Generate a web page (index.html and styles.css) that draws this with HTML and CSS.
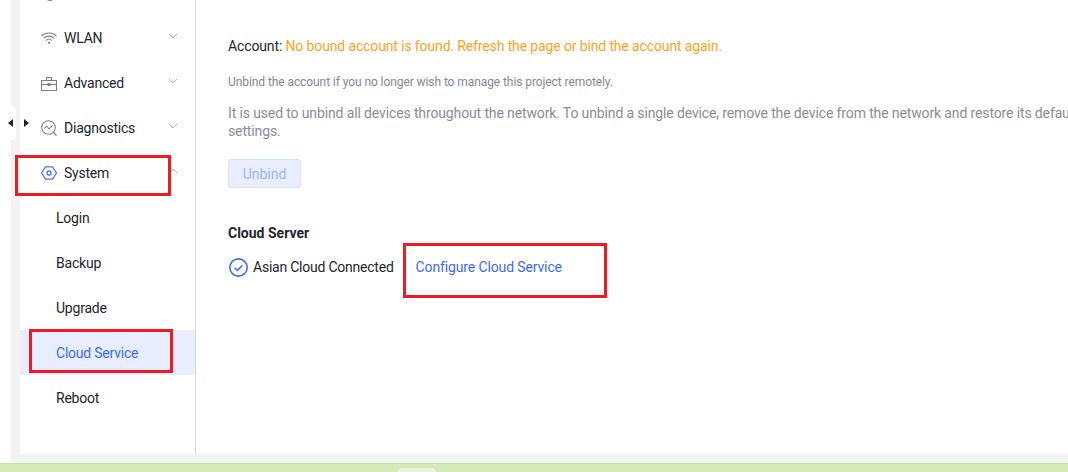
FILE: index.html
```html
<!DOCTYPE html>
<html lang="en">
<head>
  <meta charset="UTF-8">
  <title>Cloud Service</title>
  <link rel="stylesheet" href="styles.css">
</head>
<body>
<div class="page">
  <div class="shell">
    <div class="pager">
      <span class="pager-btn"><i class="arrow-left"></i></span>
      <span class="pager-btn"><i class="arrow-right"></i></span>
    </div>
    <aside class="sidebar">
      <div class="menu">
        <div class="menu-item">
          <svg class="icon icon-top" viewBox="0 0 16 16"><circle class="dot" cx="8" cy="8" r="5"/></svg>
        </div>
        <div class="menu-item">
          <svg class="icon" viewBox="0 0 16 16"><path d="M.5 6.2C4.6 2 11.400 2 15.500 6.200M2.700 8.400C5.600 5.400 10.400 5.400 13.300 8.400M4.900 10.500C6.700 8.800 9.300 8.800 11.100 10.500"/><circle class="dot" cx="8" cy="12.900" r="1.100"/></svg>
          <span>WLAN</span>
          <svg class="chevron" viewBox="0 0 10 6"><path d="M1 1l4 4 4-4"/></svg>
        </div>
        <div class="menu-item">
          <svg class="icon" viewBox="0 0 16 16"><path d="M.5 5.500h15v10h-15zM.5 9.500h15M5.500 5.500v-3h5v3"/><path d="M7 8.500h2v2H7z"/></svg>
          <span>Advanced</span>
          <svg class="chevron" viewBox="0 0 10 6"><path d="M1 1l4 4 4-4"/></svg>
        </div>
        <div class="menu-item">
          <svg class="icon" viewBox="0 0 16 16"><circle cx="7.500" cy="7.500" r="6.800"/><path d="M12.500 12.500l3 3M3.500 8.500l2-2.500 2.500 3 3.500-3.500"/></svg>
          <span>Diagnostics</span>
          <svg class="chevron" viewBox="0 0 10 6"><path d="M1 1l4 4 4-4"/></svg>
        </div>
        <div class="menu-item">
          <svg class="icon icon-blue" viewBox="0 0 16 16"><path d="M4.500 1.800h7L15.400 8l-3.900 6.200h-7L.6 8z"/><circle cx="8" cy="8" r="2"/></svg>
          <span>System</span>
          <svg class="chevron" viewBox="0 0 10 6"><path d="M1 5l4-4 4 4"/></svg>
        </div>
        <div class="menu-item sub">Login</div>
        <div class="menu-item sub">Backup</div>
        <div class="menu-item sub">Upgrade</div>
        <div class="menu-item sub active">Cloud Service</div>
        <div class="menu-item sub">Reboot</div>
      </div>
    </aside>
    <main class="content">
      <p class="account">Account: <span class="warn">No bound account is found. Refresh the page or bind the account again.</span></p>
      <p class="hint">Unbind the account if you no longer wish to manage this project remotely.</p>
      <p class="note">It is used to unbind all devices throughout the network. To unbind a single device, remove the device from the network and restore its default settings.</p>
      <button class="unbind" disabled>Unbind</button>
      <h3 class="section">Cloud Server</h3>
      <div class="status">
        <svg class="check" viewBox="0 0 18 18"><circle cx="9" cy="9" r="8.200"/><path d="M5.300 9.200l2.700 2.600 4.700-5"/></svg>
        <span class="status-text">Asian Cloud Connected</span>
        <a class="link" href="#">Configure Cloud Service</a>
      </div>
    </main>
  </div>
  <div class="footer-bar"><span class="footer-tab"></span></div>

  <div class="mark mark-system"></div>
  <div class="mark mark-cloud"></div>
  <div class="mark mark-config"></div>
</div>
</body>
</html>
```

FILE: styles.css
```css
* { box-sizing: border-box; }

html, body {
  margin: 0;
  height: 100%;
  overflow: hidden;
}

body {
  font-family: Roboto, "Noto Sans", sans-serif;
  font-size: 14px;
  letter-spacing: -0.13px;
  color: #23262b;
  background: #fff;
}

.page {
  position: relative;
  width: 1068px;
  height: 472px;
  display: flex;
  flex-direction: column;
  overflow: hidden;
}

.shell {
  position: relative;
  flex: 1;
  min-height: 0;
  margin-left: 11px;
  padding: 0 0 9px 9px;
  background: #f3f3f3;
  display: flex;
}

.pager {
  position: absolute;
  z-index: 2;
  left: -6px;
  top: 106px;
  display: flex;
  gap: 5px;
}

.pager-btn {
  width: 11px;
  height: 34px;
  background: #fff;
  border-radius: 5px;
  display: flex;
  align-items: center;
  justify-content: center;
}

.arrow-left, .arrow-right {
  width: 0;
  height: 0;
  border-top: 4px solid transparent;
  border-bottom: 4px solid transparent;
}

.arrow-left { border-right: 5px solid #222; }
.arrow-right { border-left: 5px solid #222; }

.sidebar {
  width: 176px;
  flex-shrink: 0;
  background: #fff;
  border-right: 1px solid #d9d9d9;
  overflow: hidden;
}

.menu { margin-top: -30px; }

.menu-item {
  height: 45px;
  padding: 0 17px 0 21px;
  display: flex;
  align-items: center;
  gap: 7px;
  line-height: 20px;
  letter-spacing: -0.22px;
}

.menu-item span { flex: 1; }

.menu-item.sub { padding-left: 36px; }

.menu-item.active {
  background: #e8eeff;
  color: #3e6bf2;
}

.icon {
  width: 16px;
  height: 16px;
  flex-shrink: 0;
  fill: none;
  stroke: #7d8187;
  stroke-width: 1.100;
}

.icon .dot {
  fill: #7d8187;
  stroke: none;
}

.icon-top { margin: 6px 0 0 1px; }

.icon-blue { stroke: #4f74f3; stroke-width: 1.300; }

.chevron {
  width: 10px;
  height: 6px;
  margin-top: -4px;
  fill: none;
  stroke: #b0b3b8;
  stroke-width: 1;
}

.content {
  flex: 1;
  min-width: 0;
  background: #fff;
  padding: 36px 0 0 32px;
}

.content p { margin: 0; }

.account { line-height: 20px; width: 880px; }

.warn { color: #fda31b; }

.hint {
  margin-top: 18px !important;
  font-size: 12px;
  letter-spacing: -0.08px;
  line-height: 16px;
  color: #85888e;
}

.note {
  margin-top: 14px !important;
  line-height: 18px;
  color: #8a8d93;
  width: 880px;
}

.unbind {
  display: block;
  margin-top: 19px;
  width: 73px;
  height: 29px;
  padding: 0;
  font: inherit;
  letter-spacing: 0;
  color: #9db3fb;
  background: #e8eeff;
  border: 1px solid #d8e1fc;
  border-radius: 3px;
}

.section {
  margin: 35px 0 0;
  font-size: 14px;
  font-weight: 700;
  letter-spacing: 0;
  line-height: 20px;
}

.status {
  margin-top: 14px;
  display: flex;
  align-items: center;
  height: 20px;
}

.status-text { letter-spacing: -0.23px; }

.check {
  width: 19px;
  height: 19px;
  margin: 0 5px 0 1px;
  fill: none;
  stroke: #3e6bf2;
  stroke-width: 1.500;
}

.link {
  margin-left: 22px;
  color: #3e6bf2;
  text-decoration: none;
}

.footer-bar {
  height: 9px;
  flex-shrink: 0;
  background: #d6e9b9;
  border-top: 1px solid #c9deab;
  display: flex;
  padding: 4px 0 0 398px;
}

.footer-tab {
  width: 38px;
  background: #eaf4dc;
  border-radius: 4px 4px 0 0;
}

/* red annotation boxes from the screenshot */
.mark {
  position: absolute;
  border: 3px solid #ed1c24;
}

.mark-system { left: 15px; top: 155px; width: 156px; height: 41px; }
.mark-cloud { left: 29px; top: 329px; width: 144px; height: 44px; }
.mark-config { left: 403px; top: 243px; width: 204px; height: 55px; }
```
